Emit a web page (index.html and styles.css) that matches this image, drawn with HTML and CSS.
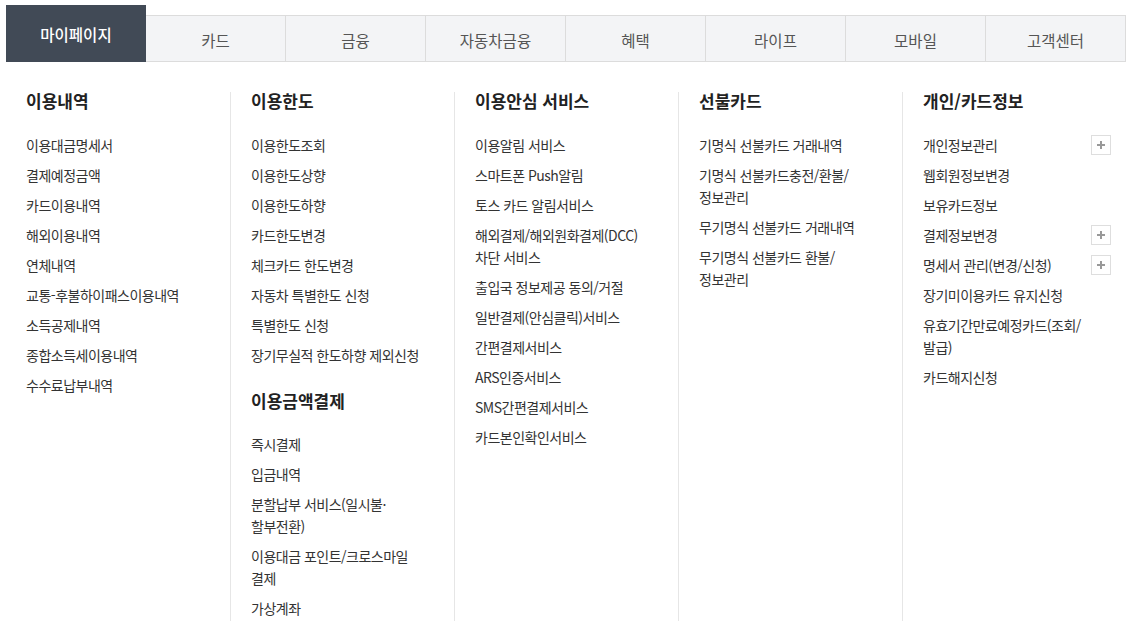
FILE: index.html
```html
<!DOCTYPE html>
<html lang="ko">
<head>
<meta charset="utf-8">
<title>마이페이지</title>
<link rel="stylesheet" href="styles.css">
</head>
<body>
<div class="page">
  <nav class="tabs">
    <a class="tab active">마이페이지</a>
    <a class="tab">카드</a>
    <a class="tab">금융</a>
    <a class="tab">자동차금융</a>
    <a class="tab">혜택</a>
    <a class="tab">라이프</a>
    <a class="tab">모바일</a>
    <a class="tab">고객센터</a>
  </nav>
  <div class="cols">
    <section class="col">
      <h3 class="head">이용내역</h3>
      <ul class="list">
        <li class="item"><span class="txt">이용대금명세서</span></li>
        <li class="item"><span class="txt">결제예정금액</span></li>
        <li class="item"><span class="txt">카드이용내역</span></li>
        <li class="item"><span class="txt">해외이용내역</span></li>
        <li class="item"><span class="txt">연체내역</span></li>
        <li class="item"><span class="txt">교통-후불하이패스이용내역</span></li>
        <li class="item"><span class="txt">소득공제내역</span></li>
        <li class="item"><span class="txt">종합소득세이용내역</span></li>
        <li class="item"><span class="txt">수수료납부내역</span></li>
      </ul>
    </section>
    <section class="col">
      <h3 class="head">이용한도</h3>
      <ul class="list">
        <li class="item"><span class="txt">이용한도조회</span></li>
        <li class="item"><span class="txt">이용한도상향</span></li>
        <li class="item"><span class="txt">이용한도하향</span></li>
        <li class="item"><span class="txt">카드한도변경</span></li>
        <li class="item"><span class="txt">체크카드 한도변경</span></li>
        <li class="item"><span class="txt">자동차 특별한도 신청</span></li>
        <li class="item"><span class="txt">특별한도 신청</span></li>
        <li class="item"><span class="txt">장기무실적 한도하향 제외신청</span></li>
      </ul>
      <h3 class="head sub">이용금액결제</h3>
      <ul class="list">
        <li class="item"><span class="txt">즉시결제</span></li>
        <li class="item"><span class="txt">입금내역</span></li>
        <li class="item"><span class="txt">분할납부 서비스(일시불·할부전환)</span></li>
        <li class="item"><span class="txt">이용대금 포인트/크로스마일 결제</span></li>
        <li class="item"><span class="txt">가상계좌</span></li>
      </ul>
    </section>
    <section class="col">
      <h3 class="head">이용안심 서비스</h3>
      <ul class="list">
        <li class="item"><span class="txt">이용알림 서비스</span></li>
        <li class="item"><span class="txt">스마트폰 Push알림</span></li>
        <li class="item"><span class="txt">토스 카드 알림서비스</span></li>
        <li class="item"><span class="txt">해외결제/해외원화결제(DCC) 차단 서비스</span></li>
        <li class="item"><span class="txt">출입국 정보제공 동의/거절</span></li>
        <li class="item"><span class="txt">일반결제(안심클릭)서비스</span></li>
        <li class="item"><span class="txt">간편결제서비스</span></li>
        <li class="item"><span class="txt">ARS인증서비스</span></li>
        <li class="item"><span class="txt">SMS간편결제서비스</span></li>
        <li class="item"><span class="txt">카드본인확인서비스</span></li>
      </ul>
    </section>
    <section class="col">
      <h3 class="head">선불카드</h3>
      <ul class="list">
        <li class="item"><span class="txt">기명식 선불카드 거래내역</span></li>
        <li class="item"><span class="txt">기명식 선불카드충전/환불/정보관리</span></li>
        <li class="item"><span class="txt">무기명식 선불카드 거래내역</span></li>
        <li class="item"><span class="txt">무기명식 선불카드 환불/정보관리</span></li>
      </ul>
    </section>
    <section class="col">
      <h3 class="head">개인/카드정보</h3>
      <ul class="list">
        <li class="item"><span class="txt">개인정보관리</span><span class="plus" aria-label="펼치기"></span></li>
        <li class="item"><span class="txt">웹회원정보변경</span></li>
        <li class="item"><span class="txt">보유카드정보</span></li>
        <li class="item"><span class="txt">결제정보변경</span><span class="plus" aria-label="펼치기"></span></li>
        <li class="item"><span class="txt">명세서 관리(변경/신청)</span><span class="plus" aria-label="펼치기"></span></li>
        <li class="item"><span class="txt">장기미이용카드 유지신청</span></li>
        <li class="item"><span class="txt">유효기간만료예정카드(조회/발급)</span></li>
        <li class="item"><span class="txt">카드해지신청</span></li>
      </ul>
    </section>
  </div>
</div>
</body>
</html>
```
FILE: styles.css
```css
* { box-sizing: border-box; }
html, body { margin: 0; padding: 0; background: #fff; }
body {
  font-family: "Noto Sans CJK KR", "Noto Sans", sans-serif;
  color: #333;
}
.page { padding: 5px 5px 0 6px; }

.tabs {
  display: flex;
  align-items: flex-end;
  width: 1120px;
}
.tab {
  width: 140px;
  height: 47px;
  display: flex;
  align-items: center;
  justify-content: center;
  background: #f3f4f6;
  border-top: 1px solid #dcdcdc;
  border-bottom: 1px solid #dcdcdc;
  border-right: 1px solid #dcdcdc;
  font-size: 15.5px;
  color: #555;
  padding-top: 2px;
}
.tab.active {
  height: 57px;
  background: #414a56;
  color: #fff;
  border: none;
  font-weight: 500;
  padding-top: 0;
}

.cols {
  display: grid;
  grid-template-columns: repeat(5, 224px);
  margin-top: 30px;
  min-height: 540px;
}
.col { padding: 0 15px 0 20px; }
.col + .col { border-left: 1px solid #e6e6e6; }

.head {
  margin: 0 0 25px;
  font-size: 17px;
  line-height: 17px;
  font-weight: 700;
  color: #222;
}
.head.sub { margin-top: 26px; margin-bottom: 24px; }

.list { list-style: none; margin: 0; padding: 0; }
.item {
  display: flex;
  justify-content: space-between;
  align-items: flex-start;
  font-size: 14px;
  line-height: 22px;
  letter-spacing: -0.5px;
  color: #333;
  word-break: keep-all;
}
.item + .item { margin-top: 8px; }
.txt { max-width: 175px; }

.plus {
  position: relative;
  flex: none;
  width: 20px;
  height: 20px;
  margin-top: 1px;
  border: 1px solid #dedede;
  background: #fff;
}
.plus::before, .plus::after {
  content: "";
  position: absolute;
  background: #999;
  left: 50%;
  top: 50%;
  transform: translate(-50%, -50%);
}
.plus::before { width: 8px; height: 2px; }
.plus::after { width: 2px; height: 8px; }
```
